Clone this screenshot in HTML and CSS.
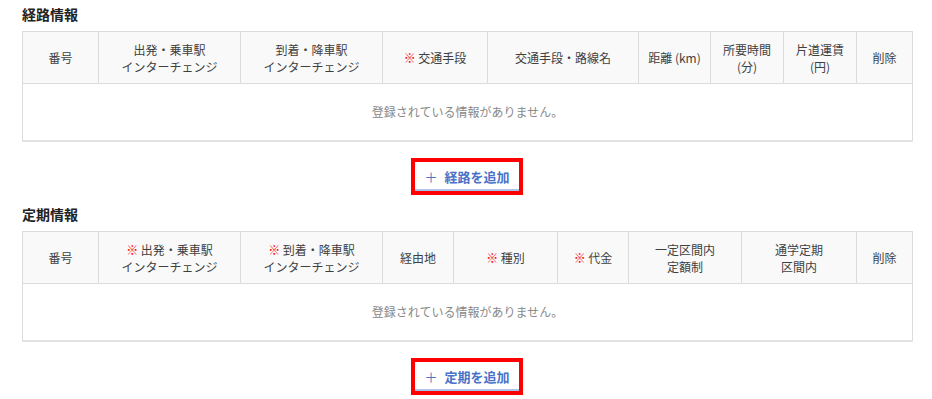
FILE: index.html
```html
<!DOCTYPE html>
<html lang="ja">
<head>
    <meta charset="UTF-8">
    <title>経路・定期情報</title>
    <link rel="stylesheet" href="styles.css">
</head>
<body>
    <div class="page">
        <h2 class="section-title">経路情報</h2>
        <table class="info-table">
            <colgroup>
                <col style="width: 76px">
                <col style="width: 142px">
                <col style="width: 142px">
                <col style="width: 105px">
                <col style="width: 151px">
                <col style="width: 72px">
                <col style="width: 73px">
                <col style="width: 73px">
                <col style="width: 56px">
            </colgroup>
            <thead>
                <tr>
                    <th>番号</th>
                    <th>出発・乗車駅<br>インターチェンジ</th>
                    <th>到着・降車駅<br>インターチェンジ</th>
                    <th><span class="req">※</span> 交通手段</th>
                    <th>交通手段・路線名</th>
                    <th>距離 (km)</th>
                    <th>所要時間<br>(分)</th>
                    <th>片道運賃<br>(円)</th>
                    <th>削除</th>
                </tr>
            </thead>
            <tbody>
                <tr>
                    <td colspan="9" class="empty">登録されている情報がありません。</td>
                </tr>
            </tbody>
        </table>
        <div class="add-row">
            <button class="add-btn"><span class="plus">＋</span>経路を追加</button>
        </div>

        <h2 class="section-title">定期情報</h2>
        <table class="info-table">
            <colgroup>
                <col style="width: 76px">
                <col style="width: 142px">
                <col style="width: 142px">
                <col style="width: 71px">
                <col style="width: 104px">
                <col style="width: 71px">
                <col style="width: 113px">
                <col style="width: 115px">
                <col style="width: 56px">
            </colgroup>
            <thead>
                <tr>
                    <th>番号</th>
                    <th><span class="req">※</span> 出発・乗車駅<br>インターチェンジ</th>
                    <th><span class="req">※</span> 到着・降車駅<br>インターチェンジ</th>
                    <th>経由地</th>
                    <th><span class="req">※</span> 種別</th>
                    <th><span class="req">※</span> 代金</th>
                    <th>一定区間内<br>定額制</th>
                    <th>通学定期<br>区間内</th>
                    <th>削除</th>
                </tr>
            </thead>
            <tbody>
                <tr>
                    <td colspan="9" class="empty">登録されている情報がありません。</td>
                </tr>
            </tbody>
        </table>
        <div class="add-row">
            <button class="add-btn"><span class="plus">＋</span>定期を追加</button>
        </div>
    </div>
</body>
</html>
```

FILE: styles.css
```css
body {
    margin: 0;
    padding: 0;
    background: #fff;
    font-family: "Noto Sans CJK JP", "Noto Sans", sans-serif;
    color: #444;
}
.page {
    width: 890px;
    margin-left: 22px;
}
.section-title {
    font-size: 14px;
    font-weight: bold;
    color: #222;
    line-height: 20px;
    margin: 4px 0 7px;
}
.info-table {
    width: 890px;
    table-layout: fixed;
    border-collapse: collapse;
    border: 1px solid #dcdcdc;
    border-bottom: 2px solid #e2e2e2;
}
.info-table th {
    background-color: #f9f9f9;
    border: 1px solid #dcdcdc;
    font-size: 12px;
    font-weight: normal;
    line-height: 17px;
    color: #3f3f3f;
    height: 52px;
    padding: 0 4px;
    text-align: center;
    box-sizing: border-box;
}
.req {
    color: #f00;
    font-weight: bold;
}
.info-table td.empty {
    height: 54px;
    text-align: center;
    font-size: 12px;
    color: #888;
    background: #fff;
    padding: 0 0 2px;
}
.add-row {
    display: flex;
    justify-content: center;
    padding: 16px 0 5px;
}
.add-btn {
    width: 112px;
    height: 37px;
    border: 4px solid #f00;
    background: #fff;
    box-shadow: inset 0 -2px 0 #a9c3ec;
    color: #4a72c6;
    font-family: "Noto Sans CJK JP", "Noto Sans", sans-serif;
    font-size: 13px;
    font-weight: bold;
    padding: 0;
    cursor: pointer;
}
.plus {
    font-weight: normal;
    font-size: 13px;
    margin-right: 7px;
}
```
